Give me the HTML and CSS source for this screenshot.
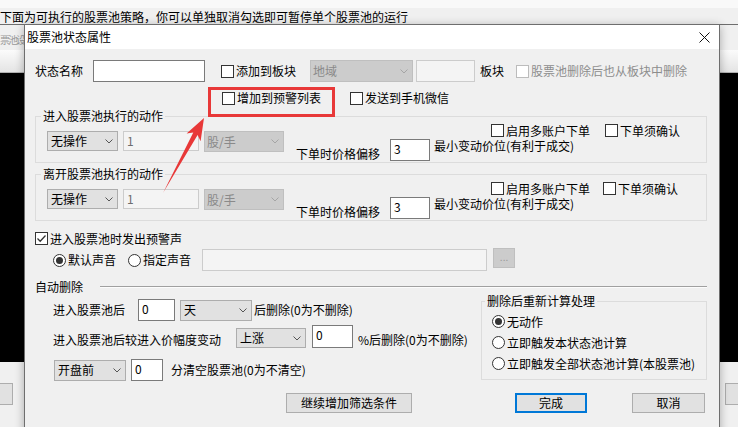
FILE: index.html
```html
<!DOCTYPE html>
<html lang="zh-CN">
<head>
<meta charset="utf-8">
<title>股票池状态属性</title>
<link rel="stylesheet" href="styles.css">
</head>
<body>
<div class="bg">
  <div class="bg-top"><span>下面为可执行的股票池策略，你可以单独取消勾选即可暂停单个股票池的运行</span></div>
  <div class="bg-tabs"><span>票池设</span></div>
  <div class="bg-header"></div>
  <div class="bg-black"></div>
  <div class="bg-bottom"><span class="bg-btn"></span><span class="bg-btn"></span></div>
</div>

<div class="dialog">
  <div class="titlebar">
    <span class="title">股票池状态属性</span>
    <svg class="close" viewBox="0 0 11 11" width="11" height="11"><path d="M0.5 0.5 L10.5 10.5 M10.5 0.5 L0.5 10.5" stroke="#111" stroke-width="1" fill="none"/></svg>
  </div>
  <div class="dbody">
    <div class="row row-a">
      <span class="lbl w58">状态名称</span>
      <span class="edit w112 h22"></span>
      <label class="chk ml16"><span class="cb"></span>添加到板块</label>
      <span class="combo disabled w103 h22 ml14">地域<svg class="chev" viewBox="0 0 8 5" width="8" height="5"><path d="M0.5 0.5 L4 4 L7.5 0.5" fill="none" stroke="currentColor"/></svg></span>
      <span class="edit disabled w59 h22 ml3"></span>
      <span class="lbl ml5">板块</span>
      <label class="chk disabled ml12"><span class="cb"></span>股票池删除后也从板块中删除</label>
    </div>

    <div class="row row-b">
      <label class="chk ml187"><span class="cb"></span>增加到预警列表</label>
      <label class="chk ml29"><span class="cb"></span>发送到手机微信</label>
    </div>

    <fieldset class="grp g-act">
      <legend>进入股票池执行的动作</legend>
      <div class="gbody">
        <div class="act-left">
          <span class="combo w71 h20">无操作<svg class="chev" viewBox="0 0 8 5" width="8" height="5"><path d="M0.5 0.5 L4 4 L7.5 0.5" fill="none" stroke="currentColor"/></svg></span>
          <span class="edit disabled w76 h20 ml5">1</span>
          <span class="combo disabled w80 h21 ml5">股/手<svg class="chev" viewBox="0 0 8 5" width="8" height="5"><path d="M0.5 0.5 L4 4 L7.5 0.5" fill="none" stroke="currentColor"/></svg></span>
        </div>
        <div class="act-right">
          <div class="act-checks">
            <label class="chk"><span class="cb"></span>启用多账户下单</label>
            <label class="chk ml15"><span class="cb"></span>下单须确认</label>
          </div>
          <div class="act-price">
            <span class="lbl price-lbl">下单时价格偏移</span>
            <span class="edit w40 h22 ml10">3</span>
            <span class="lbl price-note">最小变动价位(有利于成交)</span>
          </div>
        </div>
      </div>
    </fieldset>

    <fieldset class="grp g-act g-leave">
      <legend>离开股票池执行的动作</legend>
      <div class="gbody">
        <div class="act-left">
          <span class="combo w71 h20">无操作<svg class="chev" viewBox="0 0 8 5" width="8" height="5"><path d="M0.5 0.5 L4 4 L7.5 0.5" fill="none" stroke="currentColor"/></svg></span>
          <span class="edit disabled w76 h20 ml5">1</span>
          <span class="combo disabled w80 h21 ml5">股/手<svg class="chev" viewBox="0 0 8 5" width="8" height="5"><path d="M0.5 0.5 L4 4 L7.5 0.5" fill="none" stroke="currentColor"/></svg></span>
        </div>
        <div class="act-right">
          <div class="act-checks">
            <label class="chk"><span class="cb"></span>启用多账户下单</label>
            <label class="chk ml13"><span class="cb"></span>下单须确认</label>
          </div>
          <div class="act-price">
            <span class="lbl price-lbl">下单时价格偏移</span>
            <span class="edit w40 h22 ml10">3</span>
            <span class="lbl price-note">最小变动价位(有利于成交)</span>
          </div>
        </div>
      </div>
    </fieldset>

    <div class="row warn">
      <label class="chk"><span class="cb checked"><svg viewBox="0 0 11 11" width="11" height="11"><path d="M1.5 5.5 L4.2 8.2 L9.5 2.5" fill="none" stroke="#333" stroke-width="1.3"/></svg></span>进入股票池时发出预警声</label>
    </div>

    <div class="row sound">
      <label class="chk"><span class="rb on"></span>默认声音</label>
      <label class="chk ml12"><span class="rb"></span>指定声音</label>
      <span class="edit disabled w285 h22 ml11"></span>
      <span class="dots ml6">...</span>
    </div>

    <div class="row autodel">
      <span class="lbl">自动删除</span>
      <span class="sep"></span>
    </div>

    <div class="auto">
      <div class="auto-left">
        <div class="row ad-row1">
          <span class="lbl w72">进入股票池后</span>
          <span class="edit w37 h22 ml13">0</span>
          <span class="combo w72 h21 ml5">天<svg class="chev" viewBox="0 0 8 5" width="8" height="5"><path d="M0.5 0.5 L4 4 L7.5 0.5" fill="none" stroke="currentColor"/></svg></span>
          <span class="lbl ml2">后删除(0为不删除)</span>
        </div>
        <div class="row ad-row2">
          <span class="lbl">进入股票池后较进入价幅度变动</span>
          <span class="combo w70 h20 ml15">上涨<svg class="chev" viewBox="0 0 8 5" width="8" height="5"><path d="M0.5 0.5 L4 4 L7.5 0.5" fill="none" stroke="currentColor"/></svg></span>
          <span class="edit w41 h23 ml6">0</span>
          <span class="lbl ml5">%后删除(0为不删除)</span>
        </div>
        <div class="row ad-row3">
          <span class="combo w72 h21">开盘前<svg class="chev" viewBox="0 0 8 5" width="8" height="5"><path d="M0.5 0.5 L4 4 L7.5 0.5" fill="none" stroke="currentColor"/></svg></span>
          <span class="edit w32 h22 ml5">0</span>
          <span class="lbl ml8">分清空股票池(0为不清空)</span>
        </div>
      </div>
      <fieldset class="grp recalc">
        <legend>删除后重新计算处理</legend>
        <div class="rc-list">
          <label class="chk rc-item"><span class="rb on"></span>无动作</label>
          <label class="chk rc-item"><span class="rb"></span>立即触发本状态池计算</label>
          <label class="chk rc-item"><span class="rb"></span>立即触发全部状态池计算(本股票池)</label>
        </div>
      </fieldset>
    </div>

    <div class="row btns">
      <button class="btn b-more">继续增加筛选条件</button>
      <button class="btn b-ok">完成</button>
      <button class="btn b-cancel">取消</button>
    </div>
  </div>
</div>

<svg class="annot" viewBox="0 0 738 427" width="738" height="427">
  <rect x="209.5" y="88.5" width="124" height="27" fill="none" stroke="#e83838" stroke-width="3"/>
  <polygon points="163,193 197.6,135 200.6,141.2 204,118 186.6,133.6 193.3,132.6" fill="#e83838"/>
</svg>
</body>
</html>
```

FILE: styles.css
```css
* { box-sizing: border-box; }
html, body { margin: 0; padding: 0; }
body {
  width: 738px;
  height: 427px;
  overflow: hidden;
  position: relative;
  background: #f0f0f0;
  font-family: "Noto Sans CJK SC", "Microsoft YaHei", sans-serif;
  font-size: 12px;
  line-height: 16px;
  color: #000;
}

/* background window */
.bg { width: 738px; height: 427px; }
.bg-top {
  height: 25px;
  padding-top: 9px;
  overflow: hidden;
  white-space: nowrap;
  background: linear-gradient(#f9f9f9 0 8px, #f0f0f0 8px);
  border-bottom: 1px solid #6e6e6e;
}
.bg-tabs {
  height: 25px;
  padding-top: 7px;
  color: #9a9a9a;
  white-space: nowrap;
}
.bg-tabs span {
  display: block;
  width: 24px;
  font-size: 10px;
  letter-spacing: -2px;
  line-height: 16px;
}
.bg-header {
  height: 23px;
  background: linear-gradient(#fbfbfb, #e4e4e4);
  border-bottom: 1px solid #b0b0b0;
}
.bg-black { height: 289px; background: #000; }
.bg-bottom {
  height: 65px;
  display: flex;
  justify-content: space-between;
  padding-top: 21px;
}
.bg-btn {
  width: 14px;
  height: 22px;
  background: #e1e1e1;
  border: 1px solid #adadad;
  margin: 0 -1px;
}

/* dialog */
.dialog {
  position: absolute;
  left: 24px;
  top: 24px;
  width: 696px;
  border: 1px solid #6e6e6e;
  background: #f0f0f0;
  box-shadow: 0 2px 9px rgba(0, 0, 0, 0.3);
}
.titlebar {
  height: 24px;
  background: #fff;
  display: flex;
  align-items: center;
  padding-left: 2px;
}
.close { margin-left: auto; margin-right: 9px; }
.dbody { padding: 11px 12px 24px 10px; }

.row { display: flex; align-items: center; white-space: nowrap; }
.lbl { white-space: nowrap; }

.edit {
  display: block;
  flex: none;
  background: #fff;
  border: 1px solid #7a7a7a;
  padding: 1px 0 0 3px;
  line-height: 16px;
}
.edit.disabled { background: #f4f4f4; border-color: #cccccc; color: #6d6d6d; }

.combo {
  flex: none;
  display: flex;
  align-items: center;
  justify-content: space-between;
  background: #e1e1e1;
  border: 1px solid #adadad;
  padding-left: 3px;
  color: #000;
}
.combo .chev { margin-right: 4px; color: #555; }
.combo.disabled { background: #cccccc; border-color: #bfbfbf; color: #8a8a8a; padding-left: 2px; }
.combo.disabled .chev { color: #a5a5a5; }

.chk { display: inline-flex; align-items: center; gap: 2px; white-space: nowrap; flex: none; }
.chk.disabled { color: #8d8d8d; }
.cb {
  width: 13px;
  height: 13px;
  flex: none;
  border: 1px solid #333;
  background: #fff;
  display: flex;
  align-items: center;
  justify-content: center;
}
.chk.disabled .cb { border-color: #bcbcbc; }
.rb {
  width: 13px;
  height: 13px;
  flex: none;
  border: 1px solid #333;
  border-radius: 50%;
  background: #fff;
  display: flex;
  align-items: center;
  justify-content: center;
}
.rb.on::after {
  content: "";
  width: 7px;
  height: 7px;
  border-radius: 50%;
  background: #333;
}

/* sizes */
.w32 { width: 32px; } .w37 { width: 37px; } .w40 { width: 40px; } .w41 { width: 41px; }
.w58 { width: 58px; } .w59 { width: 59px; } .w70 { width: 70px; } .w71 { width: 71px; }
.w72 { width: 72px; } .w76 { width: 76px; } .w80 { width: 80px; } .w103 { width: 103px; }
.w112 { width: 112px; } .w285 { width: 285px; }
.h20 { height: 20px; } .h21 { height: 21px; } .h22 { height: 22px; } .h23 { height: 23px; }
.ml2 { margin-left: 2px; } .ml3 { margin-left: 3px; } .ml5 { margin-left: 5px; }
.ml6 { margin-left: 6px; } .ml8 { margin-left: 8px; } .ml10 { margin-left: 10px; }
.ml11 { margin-left: 11px; } .ml12 { margin-left: 12px; } .ml13 { margin-left: 13px; }
.ml14 { margin-left: 14px; } .ml15 { margin-left: 15px; } .ml16 { margin-left: 16px; }
.ml29 { margin-left: 29px; } .ml187 { margin-left: 187px; }

.row-a { height: 22px; }
.row-b { height: 14px; margin-top: 9px; }

/* group boxes */
.grp {
  margin: 0;
  padding: 0 0 1px 0;
  border: 1px solid #dcdcdc;
  min-width: 0;
}
.grp legend { margin-left: 5px; padding: 0 2px; line-height: 16px; }
.g-act { margin-top: 3px; }
.gbody { display: flex; align-items: flex-start; padding-left: 11px; }
.act-left { display: flex; align-items: flex-start; margin-top: 7px; }
.act-right { margin-left: 12px; }
.act-checks { display: flex; align-items: center; height: 13px; padding-left: 195px; }
.act-checks .chk { line-height: 13px; height: 13px; }
.act-price { display: flex; align-items: flex-start; height: 22px; margin-top: 2px; }
.price-lbl { align-self: flex-end; line-height: 14px; }
.price-note { margin-left: 4px; margin-top: 0; line-height: 14px; }

.warn { height: 13px; margin-top: 11px; }
.sound { height: 22px; margin-top: 4px; padding-left: 18px; }
.dots {
  width: 22px;
  height: 20px;
  align-self: flex-start;
  margin-top: -1px;
  background: #cccccc;
  border: 1px solid #bfbfbf;
  color: #9a9a9a;
  font-size: 10px;
  line-height: 16px;
  text-align: center;
}
.autodel { height: 16px; margin-top: 8px; align-items: flex-start; }
.sep {
  flex: 1;
  margin-left: 17px;
  margin-top: 7px;
  border-top: 1px solid #a0a0a0;
  border-bottom: 1px solid #fcfcfc;
}

.auto { display: flex; align-items: flex-start; margin-top: -2px; }
.auto-left { flex: 1; }
.ad-row1 { height: 22px; margin-top: 6px; padding-left: 18px; }
.ad-row2 { height: 23px; margin-top: 4px; padding-left: 18px; align-items: flex-end; }
.ad-row2 .combo { align-self: flex-end; }
.ad-row3 { height: 22px; margin-top: 11px; padding-left: 19px; }
.recalc { width: 226px; flex: none; padding-bottom: 5px; }
.recalc legend { margin-left: 3px; }
.rc-list { padding: 2px 0 0 10px; }
.rc-item { display: flex; height: 21px; }

.btns { margin-top: 12px; height: 20px; align-items: flex-start; }
.btn {
  height: 20px;
  margin: 0;
  padding: 0;
  background: #e1e1e1;
  border: 1px solid #adadad;
  font-family: inherit;
  font-size: 12px;
  line-height: 16px;
  color: #000;
  flex: none;
}
.b-more { width: 126px; margin-left: 251px; }
.b-ok { width: 72px; margin-left: 103px; border: 2px solid #0078d7; }
.b-cancel { width: 73px; margin-left: 45px; }

.annot { position: absolute; left: 0; top: 0; pointer-events: none; }
```
